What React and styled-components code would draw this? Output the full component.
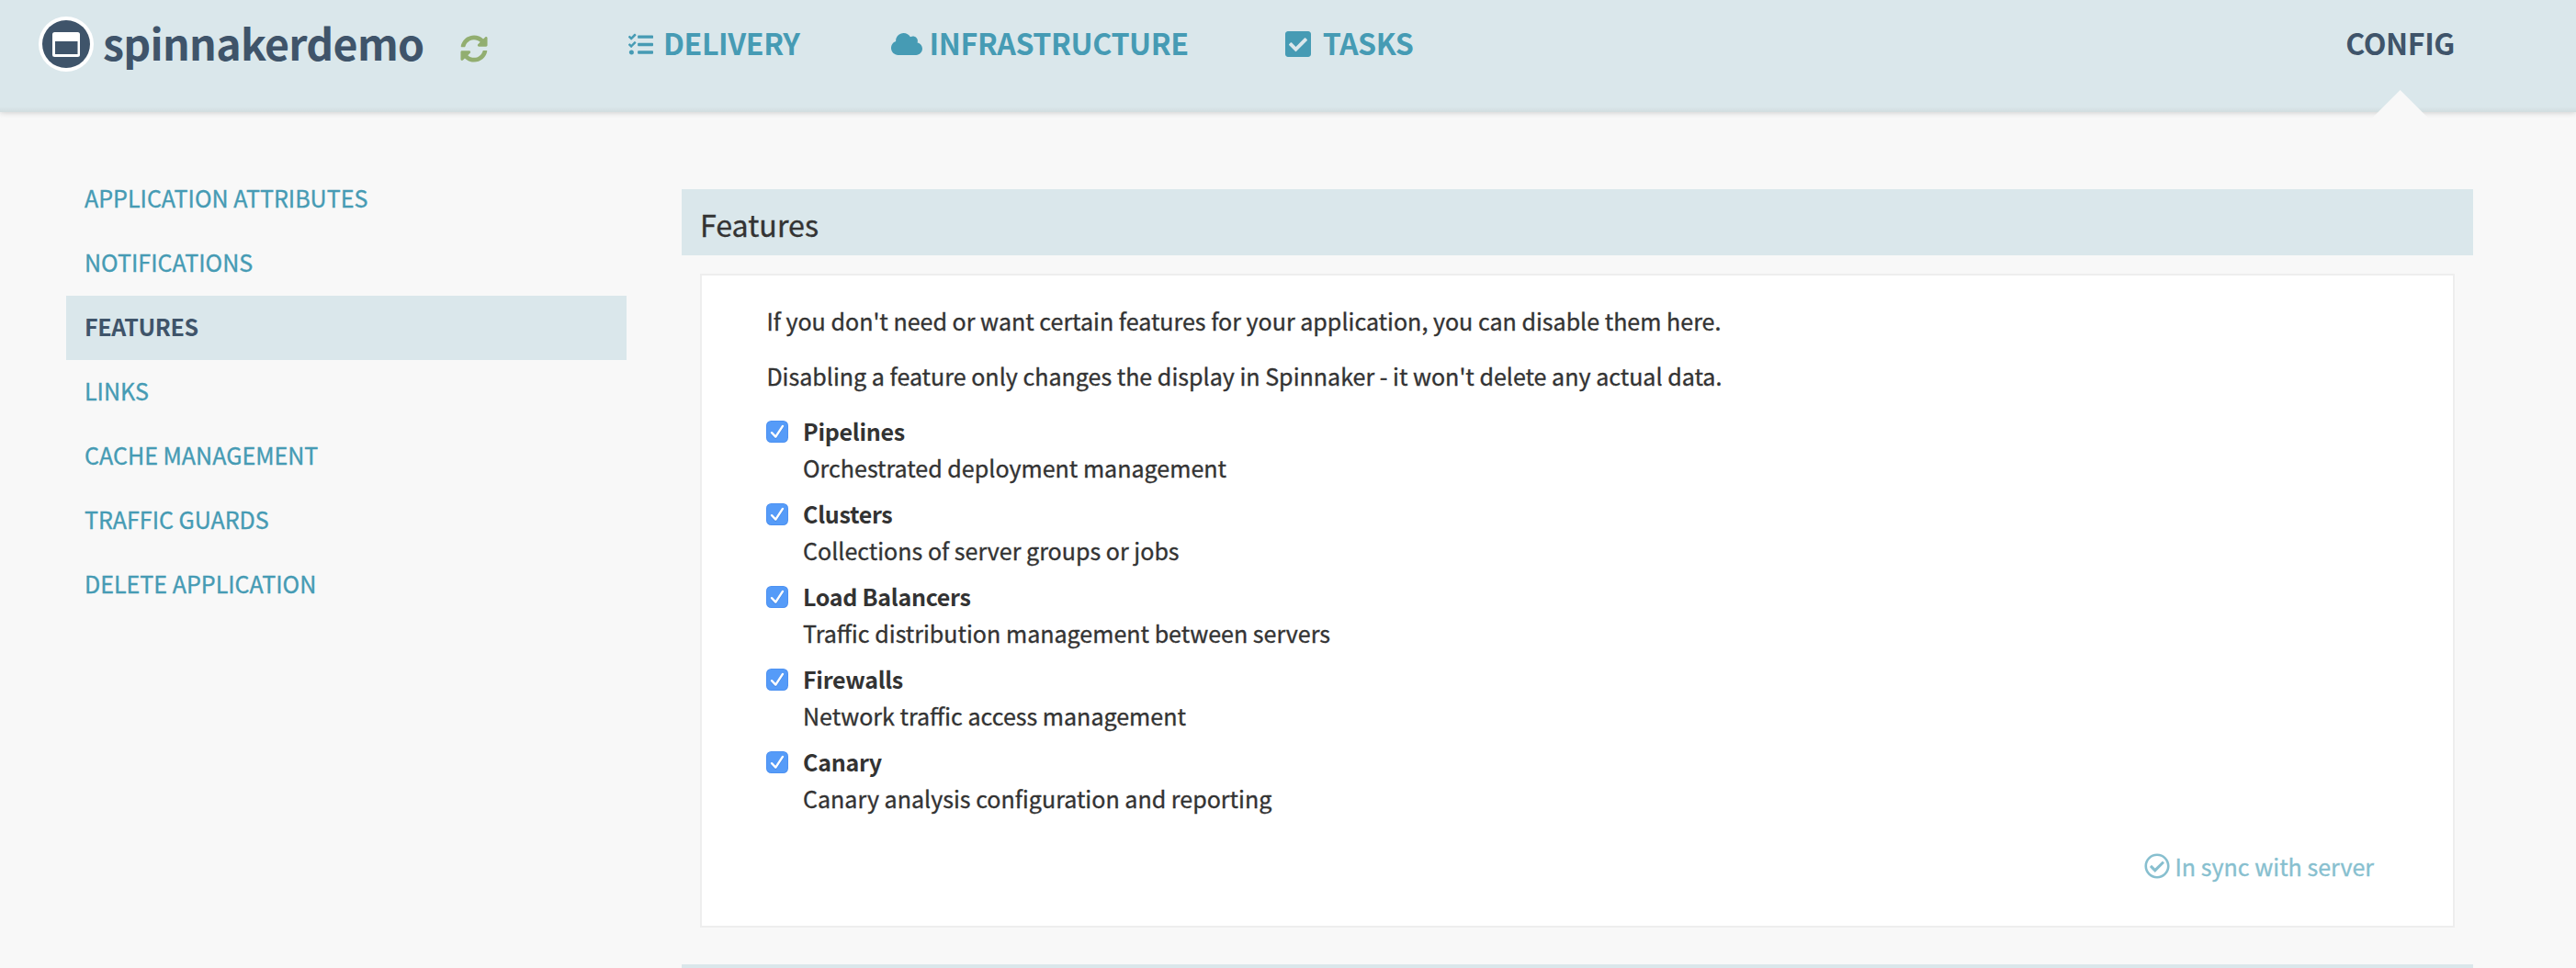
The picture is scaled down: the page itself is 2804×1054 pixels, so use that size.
import React, { useState } from 'react';
import styled, { createGlobalStyle } from 'styled-components';
import { FaTasks, FaCloud, FaCheckSquare, FaSyncAlt, FaRegCheckCircle } from 'react-icons/fa';

const color = {
  page: '#f8f8f8',
  bar: '#dae7eb',
  link: '#469bb4',
  dark: '#3f546a',
  text: '#333',
  green: '#92ae70',
  sync: '#87bfcf',
  line: '#eee',
};

const GlobalStyle = createGlobalStyle`
  * { box-sizing: border-box; }
  body {
    margin: 0;
    background: ${color.page};
    color: ${color.text};
    font-family: "Noto Sans CJK SC", "Open Sans", sans-serif;
    font-size: 25.05px;
    line-height: 40px;
    -webkit-text-stroke-width: 0.35px;
  }
  h1, h2, p, ul { margin: 0; padding: 0; font-weight: 400; }
`;

const Header = styled.header`
  display: flex;
  align-items: center;
  height: 122px;
  padding: 0 132px 30px 42px;
  background: linear-gradient(to bottom, ${color.bar} 116px, #d2dddf 122px);
  box-shadow: 0 1px 6px rgba(0, 0, 0, 0.16);
  -webkit-text-stroke-width: 0;
`;

const Brand = styled.div`
  display: flex;
  align-items: center;
  width: 642px;
`;

const Logo = styled.svg`
  width: 60px;
  height: 60px;
  margin: 4px 10px 0 0;
`;

const AppName = styled.h1`
  width: 351px;
  font-size: 46.5px;
  font-weight: 600;
  line-height: 92px;
  letter-spacing: -0.7px;
  color: ${color.dark};
`;

const Refresh = styled.span`
  display: flex;
  margin: 14px 0 0 38px;
  color: ${color.green};
`;

const Nav = styled.nav`
  display: flex;
  flex: 1;
`;

const NavLink = styled.a`
  position: relative;
  display: flex;
  align-items: center;
  gap: ${(p) => p.$gap || 0}px;
  margin-left: ${(p) => p.$before || 0};
  font-size: 32.2px;
  font-weight: 600;
  line-height: 92px;
  letter-spacing: -0.42px;
  color: ${(p) => (p.$active ? color.dark : color.link)};

  svg { margin-top: 4px; }
`;

const Pointer = styled.i`
  position: absolute;
  left: calc(50% - 32px);
  top: 98px;
  width: 64px;
  height: 32px;
  background: ${color.page};
  clip-path: polygon(50% 0, 100% 100%, 0 100%);
`;

const Page = styled.main`
  display: flex;
  align-items: flex-start;
  gap: 60px;
  padding: 60px 112px 0 72px;
`;

const SideNav = styled.nav`
  width: 610px;
`;

const SideLink = styled.a`
  display: block;
  height: 70px;
  padding-left: 20px;
  line-height: 66px;
  color: ${(p) => (p.$active ? color.dark : color.link)};
  background: ${(p) => (p.$active ? color.bar : 'transparent')};
  font-weight: ${(p) => (p.$active ? 600 : 400)};
  letter-spacing: ${(p) => (p.$active ? '-0.35px' : 'normal')};
  -webkit-text-stroke-width: ${(p) => (p.$active ? '0' : '0.35px')};
`;

const Content = styled.div`
  flex: 1;
  padding-top: 24px;
`;

const SectionTitle = styled.h2`
  height: 72px;
  padding: 4px 20px 0;
  background: ${color.bar};
  font-size: 32.2px;
  line-height: 68px;
`;

const NextSection = styled.div`
  height: 4px;
  background: ${color.bar};
`;

const Panel = styled.section`
  height: 712px;
  margin: 20px 20px 40px;
  padding: 29px 86px 0 70px;
  border: 2px solid ${color.line};
  background: #fff;
`;

const Intro = styled.p`
  margin: 0 0 20px 0.4px;
`;

const FeatureList = styled.ul`
  list-style: none;
`;

const Feature = styled.li`
  display: flex;
  gap: 16px;
  margin-bottom: 10px;
`;

const Tick = styled.svg`
  width: 24px;
  height: 24px;
  margin-top: 9px;
`;

const FeatureName = styled.div`
  font-weight: 600;
  letter-spacing: -0.3px;
  -webkit-text-stroke-width: 0;
`;

const SyncStatus = styled.div`
  display: flex;
  align-items: center;
  justify-content: flex-end;
  gap: 5px;
  margin-top: 34px;
  color: ${color.sync};

  svg { margin: -1px 1px 0 0; }
`;

const sideLinks = [
  'APPLICATION ATTRIBUTES',
  'NOTIFICATIONS',
  'FEATURES',
  'LINKS',
  'CACHE MANAGEMENT',
  'TRAFFIC GUARDS',
  'DELETE APPLICATION',
];

const features = [
  ['Pipelines', 'Orchestrated deployment management'],
  ['Clusters', 'Collections of server groups or jobs'],
  ['Load Balancers', 'Traffic distribution management between servers'],
  ['Firewalls', 'Network traffic access management'],
  ['Canary', 'Canary analysis configuration and reporting'],
];

function WindowLogo() {
  return (
    <Logo viewBox="0 0 60 60">
      <circle cx="30" cy="30" r="30" fill="#fff" />
      <circle cx="30" cy="30" r="26" fill={color.dark} />
      <rect x="15" y="17" width="30" height="27" rx="2.5" fill="#fff" />
      <rect x="18" y="27" width="24.5" height="14" fill={color.dark} />
    </Logo>
  );
}

function CheckBox() {
  return (
    <Tick viewBox="0 0 24 24">
      <rect width="24" height="24" rx="5.5" fill="#4b8ff0" />
      <rect x="0.8" y="0.8" width="22.4" height="22.4" rx="5" fill="#559bf8" />
      <path d="M6 14.4 10.3 18.8 18 6.8" fill="none" stroke="#3a77cf" strokeOpacity="0.45" strokeWidth="2.4" strokeLinecap="round" strokeLinejoin="round" />
      <path d="M6 13.2 10.3 17.6 18 5.9" fill="none" stroke="#fff" strokeWidth="2.4" strokeLinecap="round" strokeLinejoin="round" />
    </Tick>
  );
}

export default function App() {
  const [active] = useState('FEATURES');
  return (
    <>
      <GlobalStyle />
      <Header>
        <Brand>
          <WindowLogo />
          <AppName>spinnakerdemo</AppName>
          <Refresh><FaSyncAlt size={30} /></Refresh>
        </Brand>
        <Nav>
          <NavLink $gap={11}><FaTasks size={27} />DELIVERY</NavLink>
          <NavLink $gap={8} $before="99px"><FaCloud size={34} />INFRASTRUCTURE</NavLink>
          <NavLink $gap={11} $before="103px"><FaCheckSquare size={32} />TASKS</NavLink>
          <NavLink $active $before="auto">CONFIG<Pointer /></NavLink>
        </Nav>
      </Header>
      <Page>
        <SideNav>
          {sideLinks.map((label) => (
            <SideLink key={label} $active={label === active}>{label}</SideLink>
          ))}
        </SideNav>
        <Content>
          <SectionTitle>Features</SectionTitle>
          <Panel>
            <Intro>If you don't need or want certain features for your application, you can disable them here.</Intro>
            <Intro>Disabling a feature only changes the display in Spinnaker - it won't delete any actual data.</Intro>
            <FeatureList>
              {features.map(([name, description]) => (
                <Feature key={name}>
                  <CheckBox />
                  <div>
                    <FeatureName>{name}</FeatureName>
                    <div>{description}</div>
                  </div>
                </Feature>
              ))}
            </FeatureList>
            <SyncStatus><FaRegCheckCircle size={28} />In sync with server</SyncStatus>
          </Panel>
          <NextSection />
        </Content>
      </Page>
    </>
  );
}
